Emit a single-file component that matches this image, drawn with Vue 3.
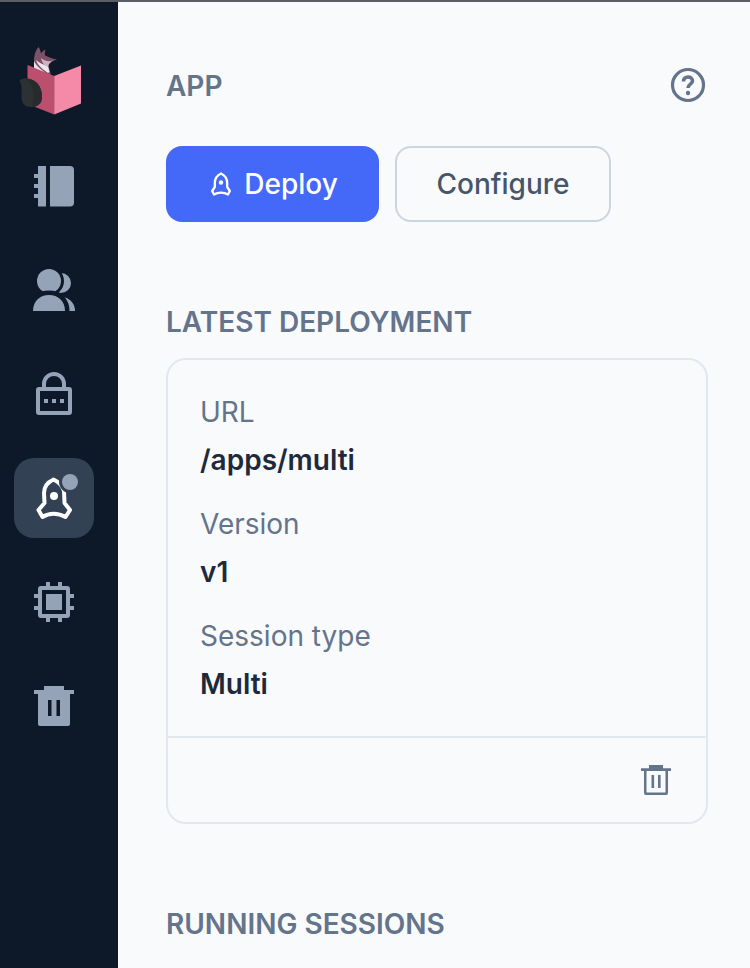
<template>
  <div class="page">
    <aside class="sidebar">
      <div class="logo">
        <svg width="80" height="80" viewBox="14 40 80 80">
          <path d="M34 62 C34 56 35 51 38.500 47 C40 49 40.500 51 41 53.500 C42 51.500 43.500 50.500 45.500 49.500 C45 51.500 44.500 53.500 45 55.500 C48 57 52 58.500 57 59.500 C54 60.500 50 62 48.500 65.500 L51 75 L34 68 Z" fill="#7d5268" />
          <path d="M34 61 C36 66 42 70 47 74 L34 68.500 Z" fill="#e8e2e6" />
          <path d="M36 60 C38 66 44 70 48 73 L49.500 72 L48 66 C44 65 39 63 36 60 Z" fill="#ece7ea" />
          <path d="M41 58 C44 61 49 62 53 60.500 C50 62 48.500 64 48 67 C45 66 42 63 41 58 Z" fill="#c9b4c0" />
          <polygon points="27.500,65 54.200,76 54.200,114.500 27.500,104" fill="#bd4f6e" />
          <polygon points="54.200,76 81,65.500 81,103.500 54.200,114.500" fill="#f589a8" />
          <path d="M19.500 80 C24 77.500 32 78 37 83 C42 88 43 97 41 102 C38 107 30 108 26 106 C22 104 21 98 21.500 93 C22 88 21.500 84.500 19.500 80 Z" fill="#2c3234" />
          <path d="M26 78.500 C32 84 36 94 32 107 C36 107 39.500 105 41 102 C43 97 42 88 37 83 C34 80 30 78.500 26 78.500 Z" fill="#272b2d" />
        </svg>
      </div>
      <nav class="nav">
        <a class="nav-item">
          <svg width="80" height="80" viewBox="14 146 80 80" fill="#94a3b8">
            <rect x="38" y="166" width="8" height="40.500" />
            <path d="M50 166 H70 A4 4 0 0 1 74 170 V202.500 A4 4 0 0 1 70 206.500 H50 Z" />
            <rect x="34" y="174" width="4" height="4" />
            <rect x="34" y="184" width="4" height="4" />
            <rect x="34" y="194" width="4" height="4" />
          </svg>
        </a>
        <a class="nav-item">
          <svg width="80" height="80" viewBox="14 250 80 80" fill="#94a3b8">
            <circle cx="61" cy="283" r="10" />
            <path d="M56 311 C56 303 60 297.500 65 297.500 C71 299.500 75 304 75 311 Z" />
            <circle cx="49" cy="281" r="12" stroke="#0d1929" stroke-width="6" paint-order="stroke" />
            <path d="M33 311 C33 301 40 295 49 295 C58 295 65 301 65 311 Z" stroke="#0d1929" stroke-width="9" paint-order="stroke" />
            <rect x="25" y="311" width="55" height="5" fill="#0d1929" />
          </svg>
        </a>
        <a class="nav-item">
          <svg width="80" height="80" viewBox="14 354 80 80" fill="none" stroke="#94a3b8" stroke-width="4">
            <rect x="38" y="389" width="32" height="24" rx="1" />
            <path d="M44 389 V384 A10 10 0 0 1 64 384 V389" />
            <g fill="#94a3b8" stroke="none">
              <rect x="44" y="399" width="4" height="4" />
              <rect x="52" y="399" width="4" height="4" />
              <rect x="60" y="399" width="4" height="4" />
            </g>
          </svg>
        </a>
        <a class="nav-item active">
          <svg width="80" height="80" viewBox="14 458 80 80">
            <path d="M53.500 479.500 C47 482.500 44 487.500 44 493 L44.500 503 L38.500 510 L42.500 517 C49 512.500 58 512.500 65.500 517 L70 510 L64.500 503 L64 491 C62.500 486 59 482 53.500 479.500 Z" fill="none" stroke="#fff" stroke-width="4" stroke-linejoin="round" />
            <circle cx="54" cy="496" r="4" fill="#fff" />
          </svg>
          <span class="dot"></span>
        </a>
        <a class="nav-item">
          <svg width="80" height="80" viewBox="14 562 80 80">
            <g fill="#94a3b8">
              <rect x="46" y="582" width="4" height="40" />
              <rect x="58" y="582" width="4" height="40" />
              <rect x="34" y="594" width="40" height="4" />
              <rect x="34" y="606" width="40" height="4" />
            </g>
            <rect x="40" y="588" width="28" height="28" rx="1" fill="#0d1929" stroke="#94a3b8" stroke-width="4" />
            <rect x="46" y="594" width="16" height="16" fill="#94a3b8" />
          </svg>
        </a>
        <a class="nav-item">
          <svg width="80" height="80" viewBox="14 666 80 80">
            <path d="M44 690 V686 H64 V690 H74 V694 H70 V724 A2 2 0 0 1 68 726 H40 A2 2 0 0 1 38 724 V694 H34 V690 Z" fill="#94a3b8" />
            <rect x="48" y="700" width="3.500" height="16" fill="#0d1929" />
            <rect x="56.500" y="700" width="3.500" height="16" fill="#0d1929" />
          </svg>
        </a>
      </nav>
    </aside>

    <main class="main">
      <div class="heading-row">
        <h2 class="title">APP</h2>
        <svg class="help" width="36" height="36" viewBox="0 0 36 36" fill="none" stroke="#64748b" stroke-width="3.200">
          <circle cx="18" cy="18" r="15.500" />
          <path d="M13.500 14.500 C13.500 11.500 15.500 10 18 10 C20.500 10 22.500 11.500 22.500 14 C22.500 17 18 17.500 18 21" stroke-width="3.600" />
          <circle cx="18" cy="26" r="2.200" fill="#64748b" stroke="none" />
        </svg>
      </div>

      <div class="actions">
        <button class="btn primary">
          <svg width="20" height="24" viewBox="0 0 20 24" fill="none" stroke="#fff" stroke-width="2.300" stroke-linejoin="round">
            <path d="M10 1.500 C6 3.500 3.800 7 3.800 11 L3.800 15 L1.200 19 L3 22.500 C7 20 13 20 17 22.500 L18.800 19 L16.200 15 L16.200 11 C16.200 7 14 3.500 10 1.500 Z" />
            <circle cx="10" cy="10.500" r="2.200" fill="#fff" stroke="none" />
          </svg>
          Deploy
        </button>
        <button class="btn outline">Configure</button>
      </div>

      <h2 class="title section">LATEST DEPLOYMENT</h2>
      <div class="card">
        <div class="card-body">
          <div v-for="row in details" :key="row.label" class="field">
            <div class="label">{{ row.label }}</div>
            <div class="value">{{ row.value }}</div>
          </div>
        </div>
        <div class="card-footer">
          <svg width="30" height="30" viewBox="0 0 30 30">
            <path d="M8 3.200 V0 H22 V3.200 H30 V6 H27 V28 A2 2 0 0 1 25 30 H5 A2 2 0 0 1 3 28 V6 H0 V3.200 Z M5.500 6 V27.500 H24.500 V6 Z" fill="#64748b" fill-rule="evenodd" />
            <rect x="10.500" y="10" width="2.600" height="13" fill="#64748b" />
            <rect x="17" y="10" width="2.600" height="13" fill="#64748b" />
          </svg>
        </div>
      </div>

      <h2 class="title running">RUNNING SESSIONS</h2>
    </main>
  </div>
</template>

<script setup>
const details = [
  { label: 'URL', value: '/apps/multi' },
  { label: 'Version', value: 'v1' },
  { label: 'Session type', value: 'Multi' },
]
</script>

<style>
html,
body {
  margin: 0;
  height: 100%;
  overflow: hidden;
}
</style>

<style scoped>
.page {
  display: flex;
  height: 968px;
  box-sizing: border-box;
  border-top: 2px solid #5b5e63;
  background: #f9fafc;
  font-family: Inter, "Liberation Sans", sans-serif;
  overflow: hidden;
}

.sidebar {
  width: 118px;
  flex-shrink: 0;
  box-sizing: border-box;
  padding: 38px 24px 0 14px;
  background: #0d1929;
}

.logo {
  height: 80px;
  margin-bottom: 26px;
}

.logo svg,
.nav-item svg {
  display: block;
}

.nav {
  display: flex;
  flex-direction: column;
  gap: 24px;
}

.nav-item {
  position: relative;
  display: block;
  width: 80px;
  height: 80px;
  border-radius: 20px;
}

.nav-item.active {
  background: #334155;
}

.dot {
  position: absolute;
  top: 16px;
  left: 48px;
  width: 16px;
  height: 16px;
  border-radius: 50%;
  background: #94a3b8;
  box-shadow: 0 0 0 3px #334155;
}

.main {
  flex: 1;
  padding: 0 42px 0 48px;
}

.heading-row {
  display: flex;
  align-items: center;
  justify-content: space-between;
  padding-top: 66px;
}

.help {
  margin: -2px 2px 0 0;
}

.title {
  margin: 0;
  font-size: 28px;
  line-height: 36px;
  font-weight: 600;
  color: #64748b;
}

.actions {
  display: flex;
  gap: 16px;
  margin-top: 42px;
}

.btn {
  display: flex;
  align-items: center;
  justify-content: center;
  gap: 13px;
  height: 76px;
  box-sizing: border-box;
  border-radius: 16px;
  font-family: inherit;
  font-size: 28px;
  font-weight: 500;
}

.primary {
  width: 213px;
  padding: 0 0 0 4px;
  border: 0;
  background: #4469f8;
  color: #fff;
}

.outline {
  width: 216px;
  border: 2px solid #cbd5e1;
  background: transparent;
  color: #475569;
}

.section {
  margin-top: 82px;
}

.card {
  margin-top: 18px;
  border: 2px solid #e2e8f0;
  border-radius: 20px;
}

.card-body {
  display: flex;
  flex-direction: column;
  gap: 16px;
  padding: 28px 32px 28px;
}

.label,
.value {
  font-size: 28px;
  line-height: 48px;
}

.label {
  color: #64748b;
}

.value {
  font-weight: 600;
  color: #1e293b;
}

.card-footer {
  display: flex;
  justify-content: flex-end;
  padding: 27px 35px 27px;
  border-top: 2px solid #e2e8f0;
}

.card-footer svg {
  display: block;
}

.running {
  margin-top: 82px;
}
</style>
